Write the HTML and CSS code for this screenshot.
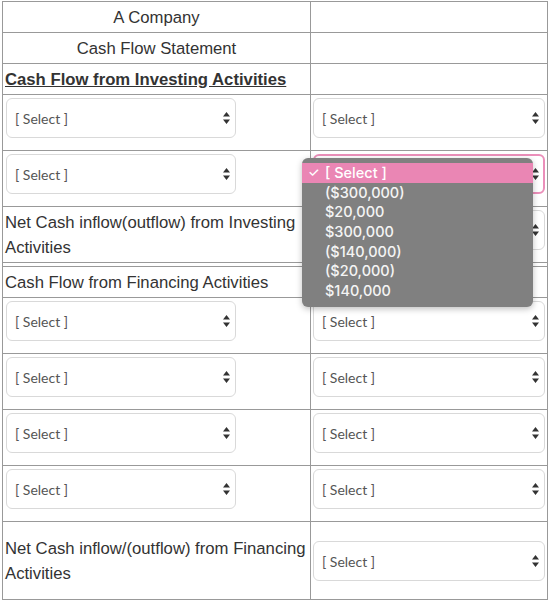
FILE: index.html
```html
<!DOCTYPE html>
<html lang="en">
<head>
  <meta charset="UTF-8" />
  <meta name="viewport" content="width=device-width, initial-scale=1.0"/>
  <title>Cash Flow Statement</title>
  <link rel="stylesheet" href="styles.css">
</head>
<body>
  <div class="sheet">
    <table class="cfs">
      <colgroup>
        <col class="col-label">
        <col class="col-value">
      </colgroup>
      <tr><td class="center">A Company</td><td></td></tr>
      <tr><td class="center">Cash Flow Statement</td><td></td></tr>
      <tr><td class="heading">Cash Flow from Investing Activities</td><td></td></tr>

      <tr>
        <td><div class="pick short"><select><option>[ Select ]</option></select><svg viewBox="0 0 7 12"><path d="M3.5 0 L7 4.5 H0 Z M3.5 12 L7 7.5 H0 Z"/></svg></div></td>
        <td><div class="pick"><select><option>[ Select ]</option></select><svg viewBox="0 0 7 12"><path d="M3.5 0 L7 4.5 H0 Z M3.5 12 L7 7.5 H0 Z"/></svg></div></td>
      </tr>
      <tr>
        <td><div class="pick short"><select><option>[ Select ]</option></select><svg viewBox="0 0 7 12"><path d="M3.5 0 L7 4.5 H0 Z M3.5 12 L7 7.5 H0 Z"/></svg></div></td>
        <td><div class="pick open"><select><option>[ Select ]</option></select><svg viewBox="0 0 7 12"><path d="M3.5 0 L7 4.5 H0 Z M3.5 12 L7 7.5 H0 Z"/></svg></div></td>
      </tr>
      <tr class="total">
        <td class="label">Net Cash inflow(outflow) from Investing Activities</td>
        <td><div class="pick"><select><option>[ Select ]</option></select><svg viewBox="0 0 7 12"><path d="M3.5 0 L7 4.5 H0 Z M3.5 12 L7 7.5 H0 Z"/></svg></div></td>
      </tr>
      <tr class="spacer"><td></td><td></td></tr>
      <tr><td class="label">Cash Flow from Financing Activities</td><td></td></tr>

      <tr>
        <td><div class="pick short"><select><option>[ Select ]</option></select><svg viewBox="0 0 7 12"><path d="M3.5 0 L7 4.5 H0 Z M3.5 12 L7 7.5 H0 Z"/></svg></div></td>
        <td><div class="pick"><select><option>[ Select ]</option></select><svg viewBox="0 0 7 12"><path d="M3.5 0 L7 4.5 H0 Z M3.5 12 L7 7.5 H0 Z"/></svg></div></td>
      </tr>
      <tr>
        <td><div class="pick short"><select><option>[ Select ]</option></select><svg viewBox="0 0 7 12"><path d="M3.5 0 L7 4.5 H0 Z M3.5 12 L7 7.5 H0 Z"/></svg></div></td>
        <td><div class="pick"><select><option>[ Select ]</option></select><svg viewBox="0 0 7 12"><path d="M3.5 0 L7 4.5 H0 Z M3.5 12 L7 7.5 H0 Z"/></svg></div></td>
      </tr>
      <tr>
        <td><div class="pick short"><select><option>[ Select ]</option></select><svg viewBox="0 0 7 12"><path d="M3.5 0 L7 4.5 H0 Z M3.5 12 L7 7.5 H0 Z"/></svg></div></td>
        <td><div class="pick"><select><option>[ Select ]</option></select><svg viewBox="0 0 7 12"><path d="M3.5 0 L7 4.5 H0 Z M3.5 12 L7 7.5 H0 Z"/></svg></div></td>
      </tr>
      <tr>
        <td><div class="pick short"><select><option>[ Select ]</option></select><svg viewBox="0 0 7 12"><path d="M3.5 0 L7 4.5 H0 Z M3.5 12 L7 7.5 H0 Z"/></svg></div></td>
        <td><div class="pick"><select><option>[ Select ]</option></select><svg viewBox="0 0 7 12"><path d="M3.5 0 L7 4.5 H0 Z M3.5 12 L7 7.5 H0 Z"/></svg></div></td>
      </tr>
      <tr class="final">
        <td class="label">Net Cash inflow/(outflow) from Financing Activities</td>
        <td><div class="pick"><select><option>[ Select ]</option></select><svg viewBox="0 0 7 12"><path d="M3.5 0 L7 4.5 H0 Z M3.5 12 L7 7.5 H0 Z"/></svg></div></td>
      </tr>
    </table>

    <!-- open native menu of the second investing select -->
    <ul class="menu">
      <li class="active"><span class="tick">✓</span>[ Select ]</li>
      <li>($300,000)</li>
      <li>$20,000</li>
      <li>$300,000</li>
      <li>($140,000)</li>
      <li>($20,000)</li>
      <li>$140,000</li>
    </ul>
  </div>
</body>
</html>
```

FILE: styles.css
```css
body {
  margin: 0;
  padding: 0;
  background: white;
  font-family: 'Liberation Sans', Arial, sans-serif;
  color: #333;
}

.sheet {
  position: relative;
  padding: 1px 0 0 2px;
}

.cfs {
  border-collapse: collapse;
  table-layout: fixed;
  width: 545px;
  border: 1px solid #666;
  font-size: 16.7px;
  line-height: 25px;
}

.col-label {
  width: 308px;
}

.col-value {
  width: 237px;
}

.cfs td {
  border: 1px solid #999;
  padding: 3px 2px 2px;
  vertical-align: top;
}

.cfs td.center {
  text-align: center;
}

.cfs td.heading {
  font-weight: bold;
  text-decoration: underline;
}

.cfs td.label {
  vertical-align: middle;
}

.spacer td {
  height: 3px;
  padding: 0;
  border-top: 1px solid #999;
}

.final td {
  vertical-align: middle;
  padding-top: 14px;
  padding-bottom: 13px;
}

.final .pick {
  margin-bottom: 0;
}

.pick {
  position: relative;
  margin-bottom: 10px;
}

.pick.short {
  width: 230px;
  margin-left: 1px;
}

.pick select {
  -webkit-appearance: none;
  appearance: none;
  display: block;
  width: 100%;
  height: 40px;
  padding: 0 0 0 8px;
  font-family: Lato, 'Open Sans', sans-serif;
  font-size: 14px;
  color: #555;
  background: white;
  border: 1px solid #d9d9d9;
  border-radius: 6px;
}

.pick svg {
  position: absolute;
  right: 6px;
  top: 14px;
  width: 7px;
  height: 12px;
  fill: #333;
}

.pick.open select {
  border: 2px solid #eb8fba;
}

.menu {
  position: absolute;
  left: 302px;
  top: 158px;
  width: 231px;
  margin: 0;
  padding: 5px 0 6px;
  list-style: none;
  background: #808080;
  border-radius: 6px;
  box-shadow: 0 2px 6px rgba(0, 0, 0, 0.25);
  font-family: Inter, 'Open Sans', sans-serif;
  font-size: 14.5px;
  font-weight: 500;
  color: #f4f4f4;
}

.menu li {
  height: 19.7px;
  line-height: 19.7px;
  padding-left: 23px;
  position: relative;
}

.menu li.active {
  background: #ea86b4;
  color: white;
}

.menu .tick {
  position: absolute;
  left: 6px;
  font-size: 13px;
}
```
